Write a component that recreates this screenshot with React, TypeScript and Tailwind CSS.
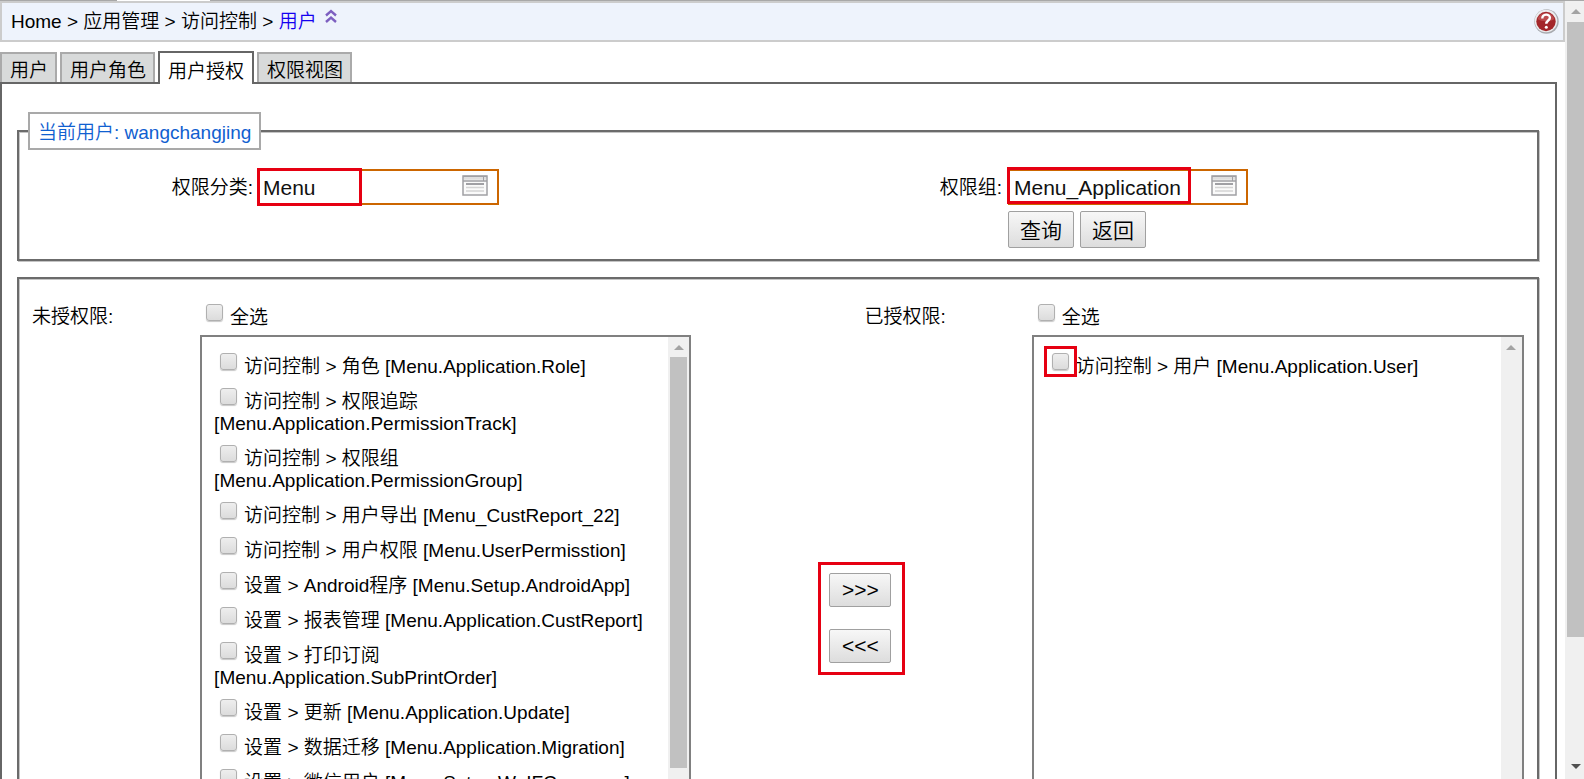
import React from "react";

const pending = [
  "访问控制 > 角色 [Menu.Application.Role]",
  "访问控制 > 权限追踪 [Menu.Application.PermissionTrack]",
  "访问控制 > 权限组 [Menu.Application.PermissionGroup]",
  "访问控制 > 用户导出 [Menu_CustReport_22]",
  "访问控制 > 用户权限 [Menu.UserPermisstion]",
  "设置 > Android程序 [Menu.Setup.AndroidApp]",
  "设置 > 报表管理 [Menu.Application.CustReport]",
  "设置 > 打印订阅 [Menu.Application.SubPrintOrder]",
  "设置 > 更新 [Menu.Application.Update]",
  "设置 > 数据迁移 [Menu.Application.Migration]",
  "设置 > 微信用户 [Menu.Setup.WeIFCompany]",
];

const granted = ["访问控制 > 用户 [Menu.Application.User]"];

const tabs = ["用户", "用户角色", "用户授权", "权限视图"];

const frame =
  "border-2 border-[#6b6b6b] shadow-[inset_1px_1px_0_#c4c4c4,1px_1px_0_#c4c4c4]";

function Check({ id }: { id: string }) {
  return (
    <input
      id={id}
      type="checkbox"
      className="mb-[3px] -mt-1 mr-[7px] ml-[6px] inline-block size-[17px] appearance-none rounded-[3px] border border-[#b0b0b0] bg-linear-to-b from-[#eeeeee] to-[#dcdcdc] align-baseline shadow-[0_1px_1px_#c8c8c8] checked:bg-[#9a9a9a]"
    />
  );
}

function ArrowUp() {
  return (
    <svg width="10" height="5" viewBox="0 0 10 5" aria-hidden="true">
      <path d="M0 5 5 0l5 5z" fill="#a3a3a3" />
    </svg>
  );
}

function WindowIcon() {
  return (
    <svg width="26" height="22" viewBox="0 0 26 22" aria-hidden="true" className="mb-[2px]">
      <rect x="1" y="1" width="24" height="19" fill="#fafafa" stroke="#a0a0a4" strokeWidth="1.500" />
      <path d="M1 1.500h24M1 6h24" stroke="#a0a0a4" strokeWidth="1.500" />
      <path d="M2 3.500h22" stroke="#dedede" strokeWidth="2.500" />
      <path d="M21.500 2v4" stroke="#a0a0a4" />
      <path d="M4 9h18" stroke="#a0a0a4" strokeWidth="2" />
      <path d="M4 12.500h18M4 16h18" stroke="#d4d4d4" strokeWidth="1.500" />
    </svg>
  );
}

function Lookup({ id, value, size, mark }: { id: string; value: string; size: string; mark: string }) {
  return (
    <div className={"relative flex h-9 items-center border-2 border-[#cc6600] " + size}>
      <input
        id={id}
        defaultValue={value}
        className="h-full min-w-0 flex-1 bg-transparent pt-[2px] pl-1 text-[21px] text-[#111] outline-none"
      />
      <button type="button" aria-label="选择">
        <WindowIcon />
      </button>
      <span className={"pointer-events-none absolute border-[3px] border-[#e60012] " + mark} />
    </div>
  );
}

function PushButton({ children, size }: { children: React.ReactNode; size: string }) {
  return (
    <button
      type="button"
      className={
        "rounded-[2px] border border-[#a0a0a0] bg-linear-to-b from-[#f7f7f7] to-[#dddddd] text-[21px] text-black " +
        size
      }
    >
      {children}
    </button>
  );
}

function PermissionList({
  name,
  items,
  thumb,
  marked,
}: {
  name: string;
  items: string[];
  thumb: boolean;
  marked: boolean;
}) {
  return (
    <div>
      <div className="h-[42px] pt-[14px] leading-[22px]">
        <label>
          <Check id={name + "-all"} />
          全选
        </label>
      </div>
      <div className="flex h-[566px] overflow-hidden border-2 border-[#808080]">
        <ul className="flex-1 pt-[6px] pr-[10px] pl-[12px] leading-[22px]">
          {items.map((text, i) => (
            <li key={text} className="relative pt-[13px]">
              <Check id={name + "-" + i} />
              <label htmlFor={name + "-" + i}>{text}</label>
              {marked && (
                <span className="pointer-events-none absolute top-[3px] -left-[2px] h-[31px] w-[33px] border-[3px] border-[#e60012]" />
              )}
            </li>
          ))}
        </ul>
        <div className="flex w-[21px] shrink-0 flex-col items-center bg-[#f0f0f0]">
          <div className="flex h-5 shrink-0 items-center justify-center">
            <ArrowUp />
          </div>
          {thumb && <div className="h-[411px] w-[17px] shrink-0 bg-[#c1c1c1]" />}
        </div>
      </div>
    </div>
  );
}

export default function App() {
  return (
    <div className="flex h-screen overflow-hidden bg-white font-['Liberation_Sans','Noto_Sans_CJK_SC',sans-serif] text-[19px] font-[350] text-black">
      <div className="min-w-0 flex-1">
        <div className="flex h-px bg-[#a8a8a8] pl-[117px]">
          <div className="w-[93px] bg-white" />
        </div>
        <header className="flex h-[41px] items-center justify-between border-2 border-[#cccccc] bg-[#eef3fc] pr-1 pl-[9px]">
          <nav className="flex items-center gap-2">
            <span className="pt-[2px]">
              Home &gt; 应用管理 &gt; 访问控制 &gt;{" "}
              <a href="#user" className="text-[#1400f0]">
                用户
              </a>
            </span>
            <button type="button" aria-label="收起" className="mb-3">
              <svg width="12" height="14" viewBox="0 0 12 14" fill="none" stroke="#7d5fc0" strokeWidth="2.400" aria-hidden="true">
                <path d="M1 6.500l5-4.500 5 4.500M1 13 6 8.500l5 4.500" />
              </svg>
            </button>
          </nav>
          <button type="button" aria-label="帮助">
            <svg width="25" height="25" viewBox="0 0 25 25" aria-hidden="true">
              <circle cx="12.500" cy="12.500" r="12.200" fill="#a9abb0" />
              <circle cx="12" cy="12" r="11.300" fill="#ececee" />
              <circle cx="12" cy="12.500" r="9.700" fill="#a3262a" />
              <path d="M3.500 10a9 9 0 0 1 17 0c-4 3-13 3-17 0z" fill="#bb4a4c" />
              <path d="M8.300 9.500c0-5 7.600-5 7.600-.8 0 2.800-3.600 2.800-3.600 6" fill="none" stroke="#fff" strokeWidth="2.400" />
              <circle cx="12.300" cy="18.300" r="1.500" fill="#fff" />
            </svg>
          </button>
        </header>

        <div className="mr-2 pt-[9px]">
          <div className="relative z-10 -mb-[2px] flex items-end gap-[3px]" role="tablist">
            {tabs.map((tab) => {
              const active = tab === "用户授权";
              return (
                <button
                  key={tab}
                  type="button"
                  role="tab"
                  aria-selected={active}
                  className={
                    active
                      ? "h-[33px] border-2 border-b-0 border-[#666666] bg-white px-2 pt-[6px] leading-[25px]"
                      : "mb-[2px] h-[30px] border-2 border-b-0 border-[#aaaaaa] bg-[#d8dada] pr-[7px] pl-2 pt-[6px] leading-[22px]"
                  }
                >
                  {tab}
                </button>
              );
            })}
          </div>

          <main className="border-2 border-[#666666] pt-7 pr-4 pb-4 pl-[15px]">
            <fieldset className={"h-[149px] " + frame}>
              <legend className="ml-[9px] h-[38px] border-2 border-[#a9a9a9] bg-white px-2 pt-px leading-[35px] text-[#1060d0]">
                当前用户: wangchangjing
              </legend>
              <div className="grid grid-cols-[238fr_510fr_241fr_529fr] gap-y-[5px] pt-[19px]">
                <label htmlFor="category" className="pt-px pr-1 text-right leading-9">
                  权限分类:
                </label>
                <Lookup
                  id="category"
                  value="Menu"
                  size="w-[242px] pr-[9px]"
                  mark="-top-[3px] -left-[2px] h-[38px] w-[105px]"
                />
                <label htmlFor="group" className="pt-px pr-[6px] text-right leading-9">
                  权限组:
                </label>
                <Lookup
                  id="group"
                  value="Menu_Application"
                  size="w-[240px] pr-[9px]"
                  mark="-top-1 -left-[3px] h-[37px] w-[184px]"
                />
                <div className="col-start-4 flex gap-[6px]">
                  <PushButton size="h-[37px] w-[66px] pt-[2px]">查询</PushButton>
                  <PushButton size="h-[37px] w-[66px] pt-[2px]">返回</PushButton>
                </div>
              </div>
            </fieldset>

            <section className={"mt-4 grid grid-cols-[181fr_491fr_340fr_492fr_13fr] pt-[14px] pb-4 " + frame}>
              <div className="pt-[12px] pl-[13px] leading-6">未授权限:</div>
              <PermissionList name="pending" items={pending} thumb marked={false} />
              <div className="flex flex-col">
                <div className="pt-[12px] pl-[173px] leading-6">已授权限:</div>
                <div className="mt-[233px] ml-[127px] flex h-[113px] w-[87px] flex-col items-start gap-[22px] border-[3px] border-[#e60012] pt-2 pl-2">
                  <PushButton size="h-[34px] w-[62px] pb-[3px]">&gt;&gt;&gt;</PushButton>
                  <PushButton size="h-[34px] w-[62px] pb-[3px]">&lt;&lt;&lt;</PushButton>
                </div>
              </div>
              <PermissionList name="granted" items={granted} thumb={false} marked />
            </section>
          </main>
        </div>
      </div>

      <div className="flex w-[19px] shrink-0 flex-col items-end border-t border-[#a8a8a8] bg-[#f0f0f0]">
        <div className="flex h-[21px] w-[17px] items-center justify-center">
          <ArrowUp />
        </div>
        <div className="h-[615px] w-[17px] bg-[#c1c1c1]" />
        <div className="mt-auto flex h-[25px] w-[17px] items-center justify-center">
          <svg width="10" height="5" viewBox="0 0 10 5" aria-hidden="true">
            <path d="M0 0h10L5 5z" fill="#505050" />
          </svg>
        </div>
      </div>
    </div>
  );
}
